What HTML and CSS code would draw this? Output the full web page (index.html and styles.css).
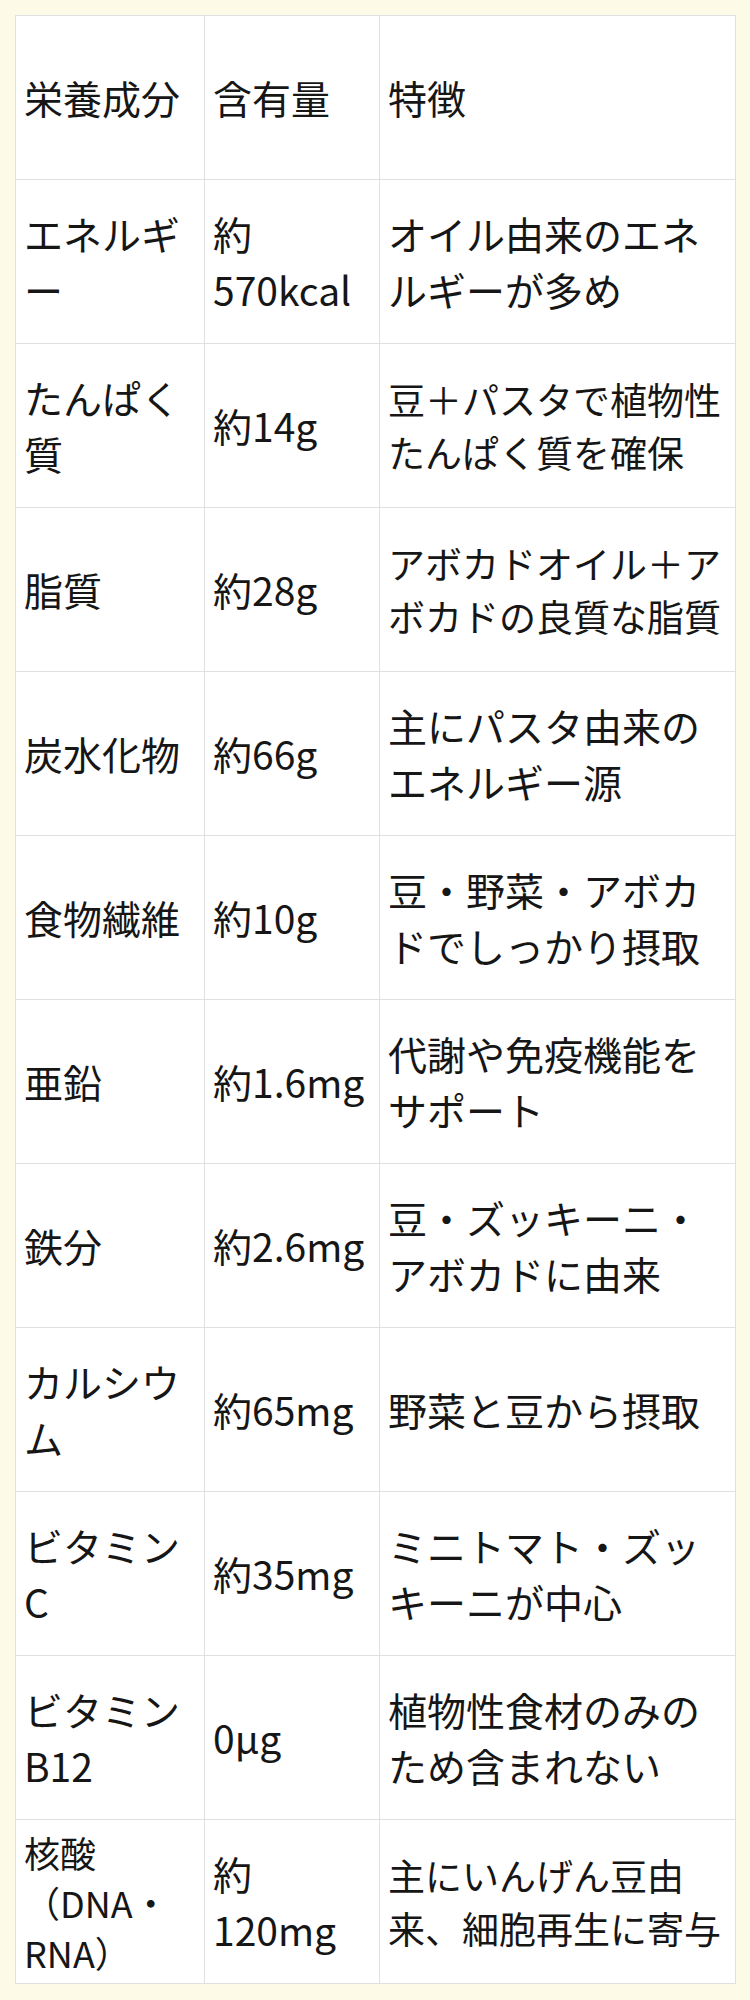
FILE: index.html
```html
<!DOCTYPE html>
<html lang="ja">
<head>
<meta charset="utf-8">
<title>栄養成分</title>
<link rel="stylesheet" href="styles.css">
</head>
<body>
<table class="nutrition">
  <colgroup>
    <col class="col-name">
    <col class="col-amount">
    <col class="col-note">
  </colgroup>
  <tbody>
    <tr><td>栄養成分</td><td>含有量</td><td>特徴</td></tr>
    <tr><td>エネルギー</td><td>約570kcal</td><td>オイル由来のエネルギーが多め</td></tr>
    <tr><td>たんぱく質</td><td>約14g</td><td class="fit">豆＋パスタで植物性たんぱく質を確保</td></tr>
    <tr><td>脂質</td><td>約28g</td><td class="fit">アボカドオイル＋アボカドの良質な脂質</td></tr>
    <tr><td>炭水化物</td><td>約66g</td><td>主にパスタ由来のエネルギー源</td></tr>
    <tr><td>食物繊維</td><td>約10g</td><td>豆・野菜・アボカドでしっかり摂取</td></tr>
    <tr><td>亜鉛</td><td>約1.6mg</td><td>代謝や免疫機能をサポート</td></tr>
    <tr><td>鉄分</td><td>約2.6mg</td><td>豆・ズッキーニ・アボカドに由来</td></tr>
    <tr><td>カルシウム</td><td>約65mg</td><td>野菜と豆から摂取</td></tr>
    <tr><td>ビタミンC</td><td>約35mg</td><td>ミニトマト・ズッキーニが中心</td></tr>
    <tr><td>ビタミンB12</td><td>0μg</td><td>植物性食材のみのため含まれない</td></tr>
    <tr><td class="small">核酸（DNA・RNA）</td><td>約120mg</td><td class="fit">主にいんげん豆由来、細胞再生に寄与</td></tr>
  </tbody>
</table>
</body>
</html>
```

FILE: styles.css
```css
html, body {
  margin: 0;
  padding: 0;
  background: #fdfbe8;
}

body {
  padding: 15px 14px 15px 15px;
  font-family: "Noto Sans CJK JP", "Noto Sans", sans-serif;
  color: #161616;
}

.nutrition {
  width: 721px;
  border-collapse: collapse;
  table-layout: fixed;
  background: #ffffff;
}

.col-name { width: 189px; }
.col-amount { width: 175px; }
.col-note { width: auto; }

.nutrition tr {
  height: 164px;
}

.nutrition td {
  border: 1px solid #e0e0e0;
  padding: 0 10px 0 8px;
  font-size: 39px;
  line-height: 1.42;
  vertical-align: middle;
  text-align: left;
}

.nutrition td.fit {
  font-size: 37px;
}

.nutrition td.small {
  font-size: 36px;
  line-height: 50px;
}
```
